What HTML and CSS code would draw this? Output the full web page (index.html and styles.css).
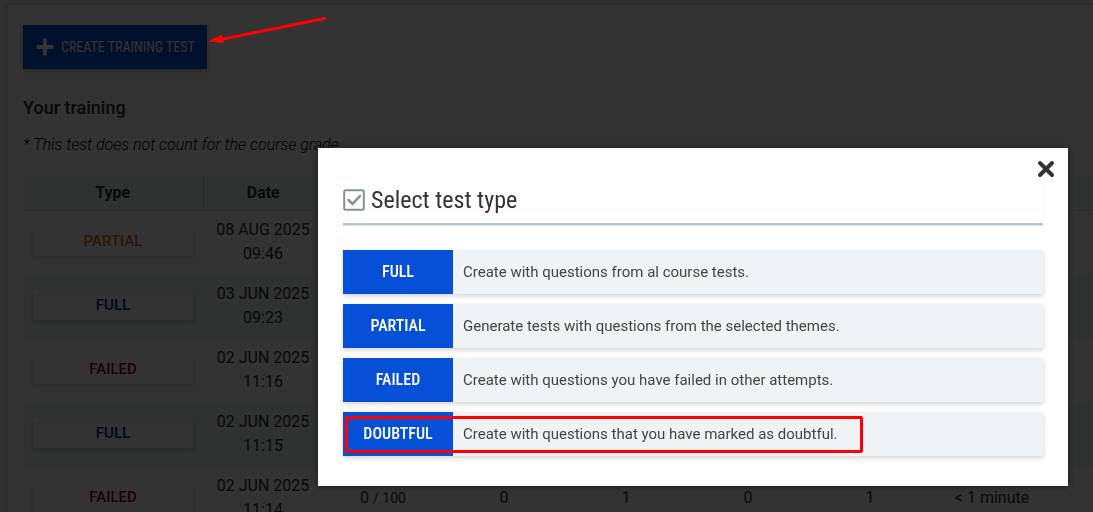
FILE: index.html
```html
<!DOCTYPE html>
<html lang="en">
<head>
<meta charset="utf-8">
<meta name="viewport" content="width=device-width, initial-scale=1">
<title>Your training</title>
<link rel="stylesheet" href="styles.css">
</head>
<body>
<main class="panel">
  <button class="create" type="button">
    <svg class="plus" viewBox="0 0 18 18" aria-hidden="true"><path d="M7.500 1h3v6.500h6.500v3h-6.500v6.500h-3v-6.500h-6.500v-3h6.500z" stroke-width="1" stroke-linejoin="round"/></svg>
    <span>CREATE TRAINING TEST</span>
  </button>
  <h1 class="title">Your training</h1>
  <p class="note">* This test does not count for the course grade</p>
  <table class="tests">
    <colgroup><col class="c-type"><col class="c-date"><col class="c-score"><col class="c-num"><col class="c-num"><col class="c-num"><col class="c-num"><col class="c-num"><col></colgroup>
    <thead><tr><th scope="col">Type</th><th scope="col">Date</th><th></th><th></th><th></th><th></th><th></th><th></th><th></th></tr></thead>
    <tbody>
      <tr><td><button type="button" class="tag partial">PARTIAL</button></td><td>08 AUG 2025<br>09:46</td><td></td><td></td><td></td><td></td><td></td><td></td><td></td></tr>
      <tr><td><button type="button" class="tag full">FULL</button></td><td>03 JUN 2025<br>09:23</td><td></td><td></td><td></td><td></td><td></td><td></td><td></td></tr>
      <tr><td><button type="button" class="tag failed">FAILED</button></td><td>02 JUN 2025<br>11:16</td><td></td><td></td><td></td><td></td><td></td><td></td><td></td></tr>
      <tr><td><button type="button" class="tag full">FULL</button></td><td>02 JUN 2025<br>11:15</td><td></td><td></td><td></td><td></td><td></td><td></td><td></td></tr>
      <tr><td><button type="button" class="tag failed">FAILED</button></td><td>02 JUN 2025<br>11:14</td><td>0 <small>/ 100</small></td><td>0</td><td>1</td><td>0</td><td>1</td><td>&lt; 1 minute</td><td></td></tr>
    </tbody>
  </table>
</main>

<div class="overlay">
  <section class="modal" role="dialog" aria-modal="true" aria-labelledby="modal-title">
    <button class="close" type="button" aria-label="Close">
      <svg viewBox="0 0 18 18" aria-hidden="true"><path d="M3 3l12 12M15 3L3 15"/></svg>
    </button>
    <header class="modal-head">
      <svg class="check" viewBox="0 0 22 22" aria-hidden="true"><rect x="1.200" y="1.200" width="19.600" height="19.600" rx="1.500"/><path d="M5.500 11l4 4 7.500-8"/></svg>
      <h2 id="modal-title">Select test type</h2>
    </header>
    <ul class="options">
      <li class="option"><button type="button">FULL</button><span>Create with questions from al course tests.</span></li>
      <li class="option"><button type="button">PARTIAL</button><span>Generate tests with questions from the selected themes.</span></li>
      <li class="option"><button type="button">FAILED</button><span>Create with questions you have failed in other attempts.</span></li>
      <li class="option"><button type="button">DOUBTFUL</button><span>Create with questions that you have marked as doubtful.</span><i class="highlight"></i></li>
    </ul>
  </section>
</div>

<svg class="arrow" viewBox="0 0 120 32" aria-hidden="true"><path class="shaft" d="M115.500 8.500L14 29"/><path class="tip" d="M-1 31.500L13 24.500L15 33z"/></svg>
</body>
</html>
```
FILE: styles.css
```css
* { box-sizing: border-box; }

body {
  margin: 0;
  min-height: 100vh;
  padding: 5px 0 0 8px;
  overflow: hidden;
  background: #eff5f3;
  color: #333;
  font: 16px/24px Roboto, "Liberation Sans", sans-serif;
}

button { border: 0; padding: 0; cursor: pointer; }

.panel {
  padding: 20px 0 0 15px;
  height: calc(100vh - 5px);
  overflow: hidden;
  background: #fff;
  box-shadow: 0 0 4px rgba(0, 0, 0, .3);
}

.create {
  display: flex;
  align-items: center;
  gap: 7px;
  height: 44px;
  padding: 0 12px 0 13px;
  background: #0650d8;
  color: #fff;
  font: 14px/20px "Roboto Condensed", Roboto, sans-serif;
  box-shadow: 0 2px 5px rgba(0, 0, 0, .3);
}

.plus { width: 18px; height: 18px; fill: #fff; stroke: #fff; overflow: visible; }

.title { margin: 27px 0 0; font-size: 18px; line-height: 24px; font-weight: 500; }

.note { margin: 13px 0 19px; color: #000; font-size: 16px; font-style: italic; font-weight: 300; }

.tests { width: 100%; table-layout: fixed; border-collapse: collapse; text-align: center; }
.c-type { width: 180px; }
.c-date { width: 120px; }
.c-score { width: 120px; }
.c-num { width: 122px; }
.tests th { height: 34px; padding: 0; font-weight: 700; background: #eff5f3; border-bottom: 1px solid #dde5e3; }
.tests th:first-child { border-right: 1px solid #cdd5d3; }
.tests td { height: 64px; padding: 7px 0 9px; }
.tests td:first-child { padding: 0 10px 4px; }
.tests tbody tr:nth-child(even) { background: #eff5f3; }
.tests small { font-size: 14px; }

.tag {
  width: 100%;
  height: 30px;
  background: #fff;
  font: 500 15px/30px Roboto, sans-serif;
  box-shadow: 0 2px 5px rgba(0, 0, 0, .2);
}
.partial { color: #d8740c; }
.full { color: #0a3068; }
.failed { color: #80101c; }

.overlay {
  position: fixed;
  inset: 0;
  display: flex;
  align-items: flex-start;
  justify-content: flex-end;
  padding: 148px 25px 0;
  background: rgba(0, 0, 0, .8);
}

.modal {
  position: relative;
  width: 100%;
  max-width: 750px;
  padding: 35px 25px 30px;
  background: #fff;
  box-shadow: 0 0 8px rgba(0, 0, 0, .5);
}

.close {
  position: absolute;
  top: 12px;
  right: 13px;
  width: 18px;
  height: 18px;
  background: none;
}
.close svg { display: block; fill: none; stroke: #333; stroke-width: 4; stroke-linecap: round; }

.modal-head {
  display: flex;
  align-items: center;
  gap: 6px;
  padding-bottom: 6px;
  border-bottom: 2px solid #b3c4cd;
  box-shadow: 0 1px 1px #dce8ee;
}
.modal-head h2 { margin: 0; font: 400 24px/34px "Roboto Condensed", Roboto, sans-serif; color: #333; }
.check { width: 22px; height: 22px; fill: none; stroke: #829193; stroke-width: 2; }
.check path { stroke-width: 2.500; stroke-linecap: round; }

.options {
  display: grid;
  gap: 10px;
  margin: 25px 0 0;
  padding: 0;
  list-style: none;
}

.option {
  position: relative;
  display: flex;
  align-items: center;
  height: 44px;
  background: #eff3f6;
  color: #444;
  font-size: 15px;
  line-height: 20px;
  box-shadow: 0 2px 5px rgba(0, 0, 0, .18);
}
.option button {
  align-self: stretch;
  width: 110px;
  margin-right: 10px;
  background: #0650d8;
  color: #fff;
  font: 500 16px/20px "Roboto Condensed", Roboto, sans-serif;
}

.highlight {
  position: absolute;
  top: 4px;
  left: 2px;
  width: 518px;
  height: 37px;
  border: 3px solid #f00;
  border-radius: 2px;
}

.arrow { position: fixed; top: 10px; left: 209px; width: 120px; height: 32px; overflow: visible; }
.shaft { fill: none; stroke: #f00; stroke-width: 3; stroke-linecap: round; }
.tip { fill: #f00; }
```
